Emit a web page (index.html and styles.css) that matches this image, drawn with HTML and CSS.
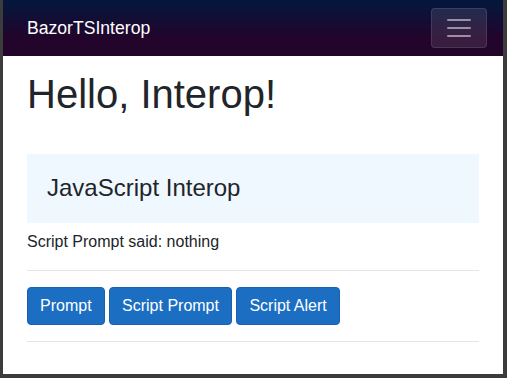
FILE: index.html
```html
<!DOCTYPE html>
<html lang="en">
<head>
<meta charset="utf-8">
<title>BazorTSInterop</title>
<link rel="stylesheet" href="styles.css">
</head>
<body>
<div class="window">
  <nav class="top-row">
    <a class="brand" href="#">BazorTSInterop</a>
    <button class="toggler" type="button" aria-label="Toggle navigation">
      <svg class="toggler-icon" viewBox="0 0 30 30" width="30" height="30">
        <path d="M4 7h22M4 15h22M4 23h22" stroke="rgba(255,255,255,0.5)" stroke-width="2" stroke-linecap="round" fill="none"/>
      </svg>
    </button>
  </nav>
  <main class="content">
    <h1 class="title">Hello, Interop!</h1>
    <div class="panel">
      <h4 class="panel-title">JavaScript Interop</h4>
    </div>
    <p class="said">Script Prompt said: nothing</p>
    <hr class="rule">
    <div class="buttons">
      <button class="btn" type="button">Prompt</button>
      <button class="btn" type="button">Script Prompt</button>
      <button class="btn" type="button">Script Alert</button>
    </div>
    <hr class="rule">
  </main>
</div>
</body>
</html>
```
FILE: styles.css
```css
html, body {
  margin: 0;
  padding: 0;
  height: 100%;
}

body {
  background: #3c3c3c;
  font-family: "Liberation Sans", Arial, Helvetica, sans-serif;
  color: #212529;
  font-size: 16px;
  line-height: 1.5;
}

.window {
  margin: 0 4px 0 3px;
  height: calc(100vh - 4px);
  background: #fff;
  overflow: hidden;
}

.top-row {
  height: 56px;
  box-sizing: border-box;
  display: flex;
  align-items: center;
  justify-content: space-between;
  padding: 0 16px 0 24px;
  background-image:
    linear-gradient(rgba(0, 0, 0, 0.4), rgba(0, 0, 0, 0.4)),
    linear-gradient(180deg, rgb(5, 39, 103) 0%, #3a0647 70%);
}

.brand {
  color: #fff;
  text-decoration: none;
  font-size: 17.6px;
  line-height: 1.15;
}

.toggler {
  display: flex;
  align-items: center;
  justify-content: center;
  box-sizing: border-box;
  width: 56px;
  height: 40px;
  padding: 4px 12px;
  background: rgba(255, 255, 255, 0.1);
  border: 1px solid rgba(255, 255, 255, 0.1);
  border-radius: 4px;
}

.toggler-icon {
  display: block;
  width: 30px;
  height: 30px;
}

.content {
  padding: 14px 24px 0 24px;
}

.title {
  margin: 0 0 8px 0;
  font-size: 40px;
  font-weight: 400;
  line-height: 1.2;
}

.panel {
  margin-top: 36px;
  padding: 20px;
  background: #f0f8ff;
}

.panel-title {
  margin: 0;
  font-size: 24px;
  font-weight: 400;
  line-height: 1.2;
}

.said {
  margin: 7px 0 16px 0;
}

.rule {
  margin: 16px 0;
  border: 0;
  border-top: 1px solid rgba(0, 0, 0, 0.1);
}

.buttons {
  line-height: 1.5;
}

.btn {
  display: inline-block;
  font-family: inherit;
  font-size: 16px;
  line-height: 1.5;
  padding: 6px 12px;
  color: #fff;
  background: #1b6ec2;
  border: 1px solid #1861ac;
  border-radius: 4px;
  vertical-align: middle;
  margin: 0;
}
```
